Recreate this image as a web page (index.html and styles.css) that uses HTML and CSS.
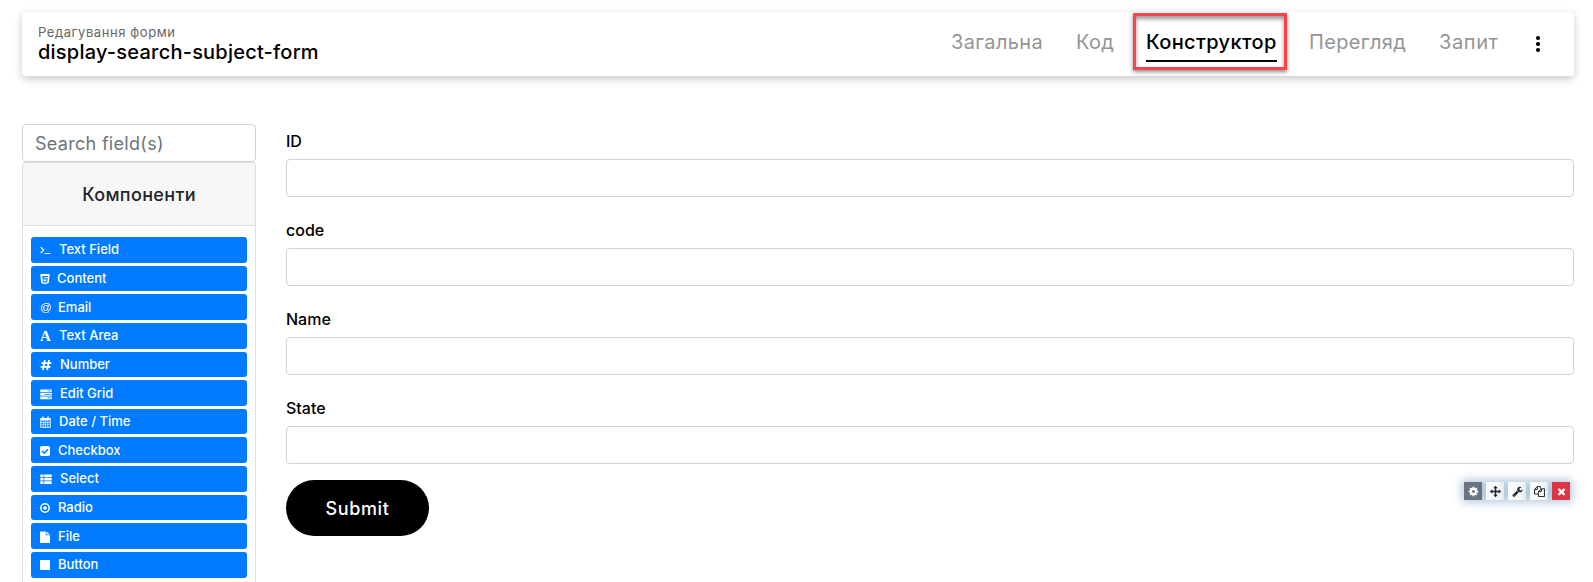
FILE: index.html
```html
<!DOCTYPE html>
<html lang="uk">
<head>
<meta charset="utf-8">
<title>display-search-subject-form</title>
<link rel="stylesheet" href="styles.css">
</head>
<body>
<header class="topbar">
  <div class="heading">
    <div class="subtitle">Редагування форми</div>
    <h1 class="title">display-search-subject-form</h1>
  </div>
  <nav class="tabs">
    <a class="tab t1">Загальна</a>
    <a class="tab t2">Код</a>
    <a class="tab t3 active">Конструктор<span class="marker"></span></a>
    <a class="tab t4">Перегляд</a>
    <a class="tab t5">Запит</a>
    <svg class="more" viewBox="0 0 6 18"><circle cx="3" cy="3" r="2.1"/><circle cx="3" cy="9" r="2.1"/><circle cx="3" cy="15" r="2.1"/></svg>
  </nav>
</header>
<main class="builder">
  <aside class="sidebar">
    <input class="search" type="text" placeholder="Search field(s)">
    <section class="card">
      <h2 class="card-head"><span>Компоненти</span></h2>
      <div class="components">
        <div class="comp"><svg class="ic w11" viewBox="0 0 11 12"><path d="M.7 3l3 3-3 3M4.500 9.500h6" fill="none" stroke="#fff" stroke-width="1.100"/></svg><span>Text Field</span></div>
        <div class="comp c-tight"><svg class="ic w10" viewBox="0 0 10 12"><path fill-rule="evenodd" d="M.3 1h9.400l-.9 9L5 11.300 1.200 10zM2.200 3l.3 3.500h3.900l-.2 1.700-1.200.4-1.200-.4-.1-.8H2.500l.2 1.700L5 9.800l2.300-.7.4-3.800H3.800l-.1-1.100h4.100L7.900 3z"/></svg><span>Content</span></div>
        <div class="comp"><b class="ic w10 glyph at">@</b><span>Email</span></div>
        <div class="comp"><b class="ic w11 glyph letter">A</b><span>Text Area</span></div>
        <div class="comp"><svg class="ic w12" viewBox="0 0 12 12"><path d="M4.900 1L2.900 11M9.100 1L7.100 11M1.500 4.200h9.900M.6 7.800h9.900" fill="none" stroke="#fff" stroke-width="1.800"/></svg><span>Number</span></div>
        <div class="comp"><svg class="ic w12" viewBox="0 0 12 12"><path fill-rule="evenodd" d="M.3 1.500h11.400v2.800H.3zM.3 5h11.400v2.800H.3zM.3 8.500h11.400v2.800H.3zM7.500 2.500v.8h3.200v-.8zM4.500 6v.8h6.200V6zM7.500 9.500v.8h3.200v-.8z"/></svg><span>Edit Grid</span></div>
        <div class="comp"><svg class="ic w11" viewBox="0 0 11 12"><path fill-rule="evenodd" d="M.3 2h1.900V.4h1.500V2h3.600V.4h1.500V2h1.900v9.700H.3zM1.200 4.400v1.700h1.700V4.400zm2.300 0v1.700h1.700V4.400zm2.300 0v1.700h1.700V4.400zm2.300 0v1.700h1.700V4.400zM1.200 6.700v1.700h1.700V6.700zm2.300 0v1.700h1.700V6.700zm2.300 0v1.700h1.700V6.700zm2.300 0v1.700h1.700V6.700zM1.200 9v1.800h1.700V9zm2.300 0v1.800h1.700V9zm2.300 0v1.800h1.700V9zm2.300 0v1.800h1.700V9z"/></svg><span>Date / Time</span></div>
        <div class="comp"><svg class="ic w10" viewBox="0 0 10 12"><rect y="1" width="10" height="10" rx="1.800"/><path d="M2 6l2.200 2.200L8 4.300" fill="none" stroke="#007bff" stroke-width="1.500"/></svg><span>Checkbox</span></div>
        <div class="comp"><svg class="ic w12" viewBox="0 0 12 12"><path d="M.3 1.500h3.200v2.700H.3zM4.200 1.500h7.500v2.700H4.200zM.3 4.900h3.200v2.700H.3zM4.200 4.900h7.500v2.700H4.200zM.3 8.300h3.200V11H.3zM4.200 8.300h7.500V11H4.200z"/></svg><span>Select</span></div>
        <div class="comp"><svg class="ic w10" viewBox="0 0 10 12"><circle cx="5" cy="6" r="4.200" fill="none" stroke="#fff" stroke-width="1.500"/><circle cx="5" cy="6" r="1.800"/></svg><span>Radio</span></div>
        <div class="comp"><svg class="ic w10" viewBox="0 0 10 12"><path d="M.6.500h5.200v3.700h4.200v7.200q0 .5-.5.500H.500Q0 11.900 0 11.400V1Q0 .5.600.500zM6.500.6L9.900 3.600H6.500z"/></svg><span>File</span></div>
        <div class="comp"><svg class="ic w10" viewBox="0 0 10 12"><path d="M0 1h10v10H0z"/></svg><span>Button</span></div>
      </div>
    </section>
  </aside>
  <form class="form">
    <label class="field"><span class="f1">ID</span><input type="text"></label>
    <label class="field"><span class="f2">code</span><input type="text"></label>
    <label class="field"><span class="f3">Name</span><input type="text"></label>
    <label class="field"><span class="f4">State</span><input type="text"></label>
    <div class="actions">
      <button class="submit" type="button"><span>Submit</span></button>
      <div class="tools">
        <i class="tool gray"><svg viewBox="0 0 1792 1792"><path d="M1152 896q0-106-75-181t-181-75-181 75-75 181 75 181 181 75 181-75 75-181zm512-109v222q0 12-8 23t-20 13l-185 28q-19 54-39 91 35 50 107 138 10 12 10 25t-9 23q-27 37-99 108t-94 71q-12 0-26-9l-138-108q-44 23-91 38-16 136-29 186-7 28-36 28h-222q-14 0-24.500-8.500t-11.500-21.500l-28-184q-49-16-90-37l-141 107q-10 9-25 9-14 0-25-11-126-114-165-168-7-10-7-23 0-12 8-23 15-21 51-66.500t54-70.500q-27-50-41-99l-183-27q-13-2-21-12.500t-8-23.500v-222q0-12 8-23t19-13l186-28q14-46 39-92-40-57-107-138-10-12-10-24 0-10 9-23 26-36 98.500-107.500t94.500-71.500q13 0 26 10l138 107q44-23 91-38 16-136 29-186 7-28 36-28h222q14 0 24.500 8.500t11.500 21.500l28 184q49 16 90 37l142-107q9-9 24-9 13 0 25 10 129 119 165 170 7 8 7 22 0 12-8 23-15 21-51 66.500t-54 70.500q26 50 41 98l183 28q13 2 21 12.500t8 23.500z"/></svg></i>
        <i class="tool"><svg viewBox="0 0 1792 1792"><path d="M1792 896q0 26-19 45l-256 256q-19 19-45 19t-45-19-19-45v-128h-384v384h128q26 0 45 19t19 45-19 45l-256 256q-19 19-45 19t-45-19l-256-256q-19-19-19-45t19-45 45-19h128v-384h-384v128q0 26-19 45t-45 19-45-19l-256-256q-19-19-19-45t19-45l256-256q19-19 45-19t45 19 19 45v128h384v-384h-128q-26 0-45-19t-19-45 19-45l256-256q19-19 45-19t45 19l256 256q19 19 19 45t-19 45-45 19h-128v384h384v-128q0-26 19-45t45-19 45 19l256 256q19 19 19 45z"/></svg></i>
        <i class="tool"><svg viewBox="0 0 1792 1792"><path d="M448 1472q0-26-19-45t-45-19-45 19-19 45 19 45 45 19 45-19 19-45zm644-420l-682 682q-37 37-90 37-52 0-91-37l-106-108q-38-36-38-90 0-53 38-91l681-681q39 98 114.500 173.500t173.500 114.500zm634-435q0 39-23 106-47 134-164.500 217.500t-258.500 83.500q-185 0-316.500-131.500t-131.500-316.500 131.500-316.500 316.500-131.500q58 0 121.500 16.500t107.500 46.500q16 11 16 28t-16 28l-293 169v224l193 107q5-3 79-48.500t135.500-81 70.500-35.500q15 0 23.500 10t8.500 25z"/></svg></i>
        <i class="tool"><svg viewBox="0 0 11 11"><path d="M4.300 8H.5V3.500L3.300.5h3v2.300M3.300.5v3H.5M4.500 5.500l3-2.700h3v7.700h-6zM7.500 2.800v2.700h-3" fill="none" stroke="#212529" stroke-width=".95"/></svg></i>
        <i class="tool red"><svg viewBox="0 0 1792 1792"><path d="M1490 1322q0 40-28 68l-136 136q-28 28-68 28t-68-28l-294-294-294 294q-28 28-68 28t-68-28l-136-136q-28-28-28-68t28-68l294-294-294-294q-28-28-28-68t28-68l136-136q28-28 68-28t68 28l294 294 294-294q28-28 68-28t68 28l136 136q28 28 28 68t-28 68l-294 294 294 294q28 28 28 68z"/></svg></i>
      </div>
    </div>
  </form>
</main>
</body>
</html>
```
FILE: styles.css
```css
* { box-sizing: border-box; }
body { margin: 0; height: 582px; overflow: hidden; padding: 12px 19px 0 22px; background: #fff; font-family: Inter, "Noto Sans", sans-serif; color: #000; }
h1, h2 { margin: 0; font-weight: 400; }
.topbar { height: 64px; display: flex; justify-content: space-between; border-radius: 4px; background: #fff; box-shadow: 0 3px 8px rgba(0,0,0,.22); padding: 0 33px 0 16px; }
.heading { padding-top: 12px; white-space: nowrap; }
.subtitle { font-size: 13px; line-height: 17px; color: #666; letter-spacing: .58px; }
.title { font-size: 20px; line-height: 22px; letter-spacing: .22px; font-weight: 450; }
.tabs { display: flex; gap: 32px; padding-top: 16px; white-space: nowrap; }
.tab { position: relative; font-size: 20px; line-height: 28px; height: 28px; color: #959595; letter-spacing: .35px; }
.t1 { width: 93px; } .t2 { width: 38px; } .t3 { width: 131px; } .t4 { width: 98px; } .t5 { width: 60px; letter-spacing: .6px; }
.active { color: #000; font-weight: 500; height: 34px; border-bottom: 2px solid #000; }
.marker { position: absolute; left: -13px; top: -15px; width: 154px; height: 57px; border: 3px solid #f9444a; box-shadow: 0 2px 4px rgba(0,0,0,.45), inset 0 3px 4px rgba(0,0,0,.4); }
.more { width: 6px; height: 18px; margin: 7px 0 0 4px; }
.builder { display: grid; grid-template-columns: 234px 1fr; gap: 30px; margin-top: 48px; height: 458px; }
input { display: block; width: 100%; height: 38px; border: 1px solid #ced4da; border-radius: 4px; background: #fff; }
.sidebar { height: 458px; overflow: hidden; }
.search { padding: 0 12px; font: 18px Inter, sans-serif; letter-spacing: .3px; }
.search::placeholder { color: #6c757d; opacity: 1; }
.card { border: 1px solid #dfdfdf; border-bottom: 0; border-radius: 4px 4px 0 0; height: 420px; }
.card-head { height: 63px; background: #f7f7f7; border-bottom: 1px solid #dfdfdf; border-radius: 3px 3px 0 0; display: flex; align-items: center; justify-content: center; color: #212529; font-size: 18px; font-weight: 500; letter-spacing: .35px; padding-top: 1px; }
.components { padding: 11px 8px 0; display: flex; flex-direction: column; gap: 3px; }
.comp { height: 25.650px; flex: none; background: #007bff; border-radius: 3px; color: #fff; display: flex; align-items: center; gap: 8px; padding: 0 0 1px 9px; font-size: 13px; font-weight: 500; line-height: 20px; }
.c-tight { gap: 7px; }
.ic { height: 12px; fill: #fff; flex: none; position: relative; top: 1px; }
.w10 { width: 10px; } .w11 { width: 11px; } .w12 { width: 12px; }
.glyph { text-align: center; }
.at { font: 11.500px/11px "Liberation Sans", sans-serif; }
.letter { font: bold 15px/13px "Liberation Serif", serif; }
.form { padding-top: 7px; }
.field { display: block; height: 89px; }
.field span { display: block; height: 28px; line-height: 21px; font-size: 16px; font-weight: 500; }
.actions { display: flex; justify-content: space-between; align-items: flex-start; margin-top: -7px; }
.submit { width: 143px; height: 56px; border: 0; border-radius: 28px; background: #000; color: #fff; font: 500 18px Inter, sans-serif; letter-spacing: .6px; padding: 0; }
.tools { display: flex; gap: 4px; margin: 2px 4px 0 0; }
.tool { width: 18px; height: 18px; display: flex; align-items: center; justify-content: center; background: #f8f9fa; box-shadow: 0 0 10px 2px rgba(48,113,169,.4); fill: #212529; }
.tool svg { width: 11px; height: 11px; }
.gray { background: #6c757d; fill: #fff; }
.red { background: #dc3545; fill: #fff; }
```
